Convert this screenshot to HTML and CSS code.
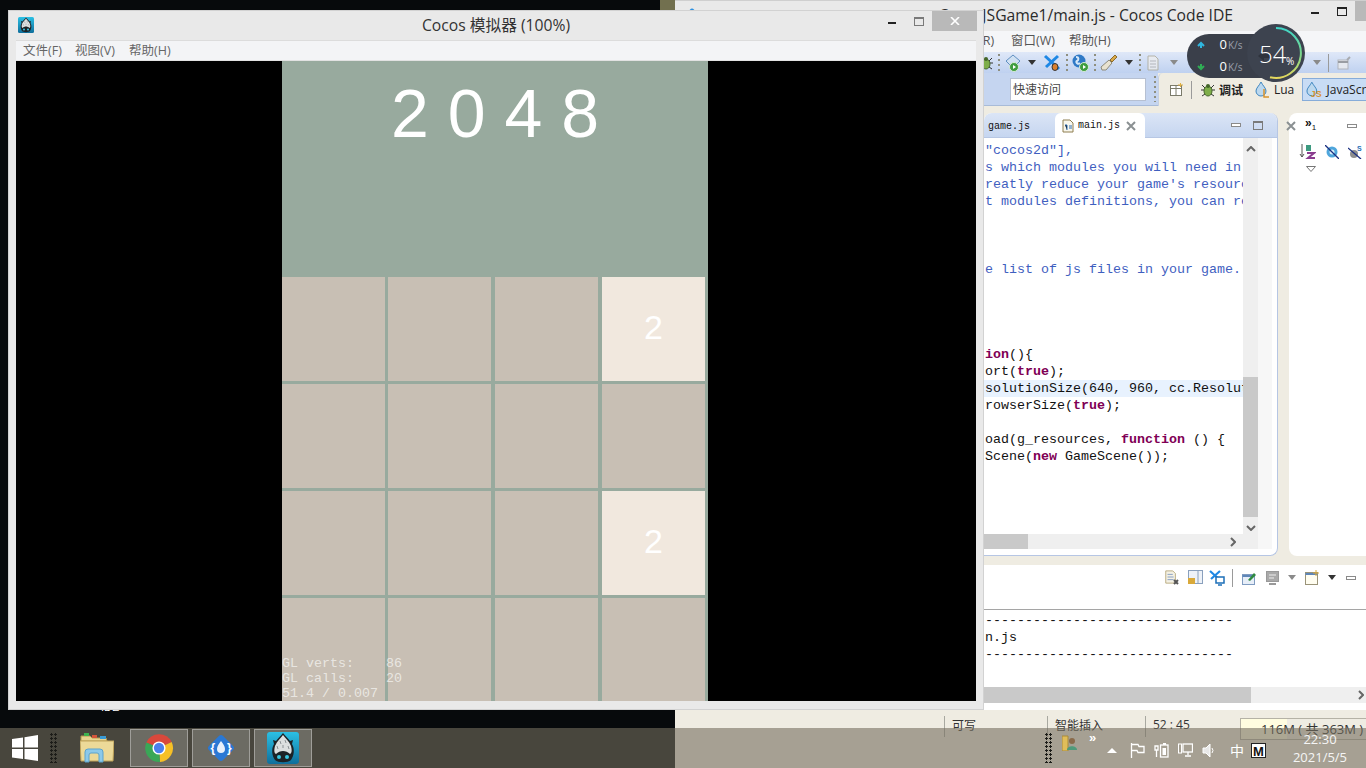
FILE: index.html
```html
<!DOCTYPE html>
<html lang="zh">
<head>
<meta charset="utf-8">
<title>Cocos 模拟器</title>
<link rel="stylesheet" href="styles.css">
</head>
<body>
<svg class="defs" width="0" height="0">
  <defs>
    <linearGradient id="cocosBg" x1="0" y1="0" x2="0" y2="1"><stop offset="0" stop-color="#2bc0e4"/><stop offset="1" stop-color="#0f6f9c"/></linearGradient>
    <linearGradient id="ringGrad" x1="0" y1="0" x2="0" y2="1"><stop offset="0" stop-color="#3fd6c8"/><stop offset=".55" stop-color="#7fd88a"/><stop offset="1" stop-color="#e6d85c"/></linearGradient>
    <symbol id="cocos" viewBox="0 0 32 32">
      <rect width="32" height="32" rx="3" fill="url(#cocosBg)"/>
      <path d="M16 1 C18 4 21 6 23 9 L26 8 L25 12 C28 17 27 24 24 28 C21 31 11 31 8 28 C5 24 4 17 7 12 L6 8 L9 9 C11 6 14 4 16 1Z" fill="#1c2226"/>
      <path d="M16 3 C18 6 22 9 24 14 C25 18 25 21 23 22 C19 18 13 18 9 22 C7 21 7 18 8 14 C10 9 14 6 16 3Z" fill="#dcdfdf"/>
      <path d="M13 9l1 3M18 8l1 3M10 14l1 3M21 14l1 3M16 13v3" stroke="#8c9295"/>
      <circle cx="12" cy="25" r="2" fill="#39c6e0"/><circle cx="20" cy="25" r="2" fill="#39c6e0"/>
    </symbol>
    <symbol id="bug" viewBox="0 0 16 16">
      <path d="M2 3l3 3M14 3l-3 3M1 8h3M15 8h-3M2 14l3-2M14 14l-3-2" stroke="#333" fill="none"/>
      <ellipse cx="8" cy="9" rx="4" ry="5" fill="#7fae4a" stroke="#44662a"/>
      <circle cx="8" cy="4" r="2" fill="#44662a"/>
    </symbol>
    <symbol id="doc" viewBox="0 0 16 16">
      <path d="M2 1h8l3 3v11H2z" fill="#f4f1e4" stroke="#b5a678"/>
      <path d="M4 5h6M4 8h7M4 11h7" stroke="#7d97c0"/>
    </symbol>
    <symbol id="jsdrop" viewBox="0 0 18 18">
      <path d="M7 1C9 5 12 7 12 10a5 5 0 0 1-10 0C2 7 5 5 7 1Z" fill="#bcd8ee" stroke="#3e86c0"/>
    </symbol>
  </defs>
</svg>

<div class="desk-patch"></div>
<div class="desk-label">IDE</div>

<section class="ide">
  <header class="ide-title">
    <svg class="ide-title-icon" width="16" height="16" viewBox="0 0 16 16"><rect x="2" y="2" width="12" height="12" rx="3" fill="#2b8fe0" transform="rotate(45 8 8)"/></svg>
    <span class="ide-title-text">CocosJSGame1/main.js - Cocos Code IDE</span>
    <div class="ide-controls">
      <span class="ctl"><i class="ctl-min"></i></span>
      <span class="ctl"><i class="ctl-max ctl-max-dark"></i></span>
      <span class="ctl ctl-close"></span>
    </div>
  </header>
  <nav class="ide-menu">
    <span class="m1">运行(R)</span><span class="m2">窗口(W)</span><span class="m3">帮助(H)</span>
  </nav>
  <div class="ide-toolbar">
    <svg width="16" height="16"><use href="#bug"/></svg>
    <i class="grip"></i>
    <svg width="18" height="18" viewBox="0 0 18 18"><path d="M1 7l7-6 7 6-7 7z" fill="#cfe0f2" stroke="#5f8fc0"/><circle cx="9" cy="13" r="4.5" fill="#3f9d3f" stroke="#d8ecd8"/><path d="M8 11l3 2-3 2z" fill="#fff"/></svg>
    <i class="tri"></i>
    <svg width="18" height="18" viewBox="0 0 18 18"><path d="M2 2l14 13M15 2L3 13" stroke="#1e88e5" stroke-width="3"/><ellipse cx="12" cy="13" rx="3" ry="3.5" fill="#d9802e" stroke="#333"/></svg>
    <i class="grip"></i>
    <svg width="17" height="18" viewBox="0 0 17 18"><circle cx="7" cy="7" r="6.5" fill="#2f79c6"/><path d="M4 3c3 0 3 3 1 4s1 4 3 2" stroke="#d6e8f8" stroke-width="2" fill="none"/><circle cx="12" cy="13" r="4.5" fill="#3f9d3f" stroke="#d8ecd8"/><path d="M11 11l3 2-3 2z" fill="#fff"/></svg>
    <i class="grip"></i>
    <svg width="18" height="18" viewBox="0 0 18 18"><path d="M10 6l5-5 2 2-5 5z" fill="#d9a94a" stroke="#8a6a2a"/><path d="M9 6l3 3-6 7H2L1 13z" fill="#e8e2d0" stroke="#8d8a7a"/></svg>
    <i class="tri"></i>
    <i class="grip"></i>
    <svg width="12" height="16" viewBox="0 0 12 16" class="dim"><path d="M1 1h7l3 3v11H1z" fill="#eee" stroke="#a9a48f"/><path d="M3 6h6M3 9h6M3 12h6" stroke="#aaa"/></svg>
    <i class="tri tri-dim"></i>
    <i class="tri tri-dim"></i>
    <i class="sep"></i>
    <svg width="14" height="14" viewBox="0 0 14 14" class="dim"><rect x="1" y="4" width="10" height="9" fill="#eee" stroke="#aaa"/><path d="M1 6h10" stroke="#888" stroke-width="2"/><path d="M10 4l3-3" stroke="#999" stroke-width="2"/></svg>
  </div>
  <div class="ide-row2">
    <div class="quick">
      <span class="quick-box">快速访问</span>
      <i class="grip grip-tall"></i>
    </div>
    <div class="persp">
      <svg width="13" height="13" viewBox="0 0 13 13"><rect x=".5" y="2.5" width="11" height="10" fill="#fff" stroke="#7a7a6a"/><path d="M.5 5.5h11M6 3v9" stroke="#7a7a6a"/><path d="M8 2h5M10.5 0v4" stroke="#e0b040"/></svg>
      <i class="sep sep-tall"></i>
      <svg width="16" height="16"><use href="#bug"/></svg>
      <span class="persp-label persp-cn">调试</span>
      <svg width="17" height="18" viewBox="0 0 17 18"><use href="#jsdrop" width="18" height="18"/><path d="M10 8v8h5" stroke="#d8922e" stroke-width="1.5" fill="none"/></svg>
      <span class="persp-label">Lua</span>
      <div class="persp-active">
        <svg width="20" height="18" viewBox="0 0 20 18"><use href="#jsdrop" width="18" height="18"/><text x="6" y="16" class="js-mark">JS</text></svg>
        <span>JavaScript</span>
      </div>
    </div>
  </div>

  <div class="ide-body">
    <div class="ide-panels">
      <section class="editor">
        <div class="tabs">
          <span class="tab-file">game.js</span>
          <span class="tab-active">
            <svg width="12" height="14" viewBox="0 0 12 14"><path d="M1 1h7l3 3v9H1z" fill="#f8f6ec" stroke="#8f7f50"/><path d="M3 6h2v5M7 7h3M7 9h3" stroke="#2f6fb5"/></svg>
            <span>main.js</span>
            <svg width="10" height="10" viewBox="0 0 10 10"><path d="M1 1l8 8M9 1l-8 8" stroke="#8a9092" stroke-width="2"/></svg>
          </span>
          <span class="tab-tools"><i class="ctl-tiny"></i><i class="ctl-max"></i></span>
        </div>
        <div class="editor-grid">
          <div class="code">
            <div class="ln"><span class="c">"cocos2d"],</span></div>
            <div class="ln"><span class="c">s which modules you will need in your game</span></div>
            <div class="ln"><span class="c">reatly reduce your game's resource size</span></div>
            <div class="ln"><span class="c">t modules definitions, you can refer to</span></div>
            <div class="ln"></div>
            <div class="ln"></div>
            <div class="ln"></div>
            <div class="ln"><span class="c">e list of js files in your game.</span></div>
            <div class="ln"></div>
            <div class="ln"></div>
            <div class="ln"></div>
            <div class="ln"></div>
            <div class="ln"><b class="k">ion</b>(){</div>
            <div class="ln">ort(<b class="k">true</b>);</div>
            <div class="ln ln-current">solutionSize(640, 960, cc.ResolutionPolicy</div>
            <div class="ln">rowserSize(<b class="k">true</b>);</div>
            <div class="ln"></div>
            <div class="ln">oad(g_resources, <b class="k">function</b> () {</div>
            <div class="ln">Scene(<b class="k">new</b> GameScene());</div>
          </div>
          <div class="vbar">
            <svg class="chev" width="10" height="6" viewBox="0 0 10 6"><path d="M1 5l4-4 4 4" stroke="#666" stroke-width="2" fill="none"/></svg>
            <div class="vthumb"></div>
            <svg class="chev" width="10" height="6" viewBox="0 0 10 6"><path d="M1 1l4 4 4-4" stroke="#666" stroke-width="2" fill="none"/></svg>
          </div>
          <div class="ruler"></div>
          <div class="hbar">
            <div class="hthumb"></div>
            <svg class="chev-r" width="6" height="10" viewBox="0 0 6 10"><path d="M1 1l4 4-4 4" stroke="#666" stroke-width="2" fill="none"/></svg>
          </div>
        </div>
      </section>
      <section class="outline">
        <svg class="outline-x" width="10" height="10" viewBox="0 0 10 10"><path d="M1 1l8 8M9 1l-8 8" stroke="#8a9092" stroke-width="2"/></svg>
        <div class="outline-tabs">
          <span class="more">»<sub>1</sub></span>
          <i class="ctl-tiny"></i>
        </div>
        <div class="outline-tools">
          <svg width="17" height="17" viewBox="0 0 17 17"><path d="M3 1v13M1 11l2 3 2-3" stroke="#555" fill="none"/><path d="M7 2h5v6H7z" fill="#3d9a80"/><path d="M8 10h7l-6 5h7" stroke="#8a3d8f" stroke-width="2" fill="none"/></svg>
          <svg width="14" height="14" viewBox="0 0 14 14"><circle cx="7" cy="7" r="5.5" fill="#4fa6dc"/><circle cx="7" cy="7" r="2.5" fill="#d8eefa"/><path d="M0 0l14 14" stroke="#1a2f80" stroke-width="1.3"/></svg>
          <svg width="14" height="14" viewBox="0 0 14 14"><circle cx="6" cy="9" r="4" fill="#8d8d8d"/><path d="M0 3l13 11" stroke="#1a2f80" stroke-width="1.3"/><text x="9" y="6" class="s-mark">S</text></svg>
        </div>
        <svg class="outline-menu" width="10" height="6" viewBox="0 0 10 6"><path d="M.5.5h9L5 5.5z" fill="#fff" stroke="#777"/></svg>
      </section>
    </div>
    <section class="console">
      <div class="console-tools">
        <svg width="15" height="15" viewBox="0 0 15 15"><use href="#doc" width="14" height="14"/><path d="M10 10l4 4M14 10l-4 4" stroke="#555" stroke-width="2"/></svg>
        <svg width="15" height="15" viewBox="0 0 15 15"><rect x=".5" y=".5" width="14" height="13" fill="#eef2f8" stroke="#8aa0bd"/><path d="M10 1v12" stroke="#8aa0bd"/><rect x="0" y="8" width="7" height="6" fill="#d9a93a"/></svg>
        <svg width="16" height="16" viewBox="0 0 16 16"><path d="M1 1l11 10M11 1L2 9" stroke="#1e88e5" stroke-width="2.2"/><rect x="7" y="7" width="8" height="6" fill="#fff" stroke="#1d6fb8" stroke-width="1.5"/><path d="M9 15h4" stroke="#1d6fb8" stroke-width="1.5"/></svg>
        <i class="sep sep-tall"></i>
        <svg width="14" height="14" viewBox="0 0 14 14"><rect x=".5" y="3.5" width="12" height="10" fill="#e7eef8" stroke="#7f9bc0"/><path d="M.5 5h12" stroke="#5f86b8" stroke-width="2"/><path d="M6 9l6-7 2 2-6 6z" fill="#2f8a3f"/></svg>
        <svg width="14" height="14" viewBox="0 0 14 14"><rect x=".5" y=".5" width="12" height="10" fill="#a9a9a9" stroke="#999"/><path d="M3 4h7M3 7h5" stroke="#eee"/><path d="M3 13h7" stroke="#999" stroke-width="2"/></svg>
        <i class="tri tri-dim"></i>
        <svg width="15" height="15" viewBox="0 0 15 15"><rect x=".5" y="2.5" width="12" height="12" fill="#fffdf0" stroke="#9a9378"/><path d="M.5 4h12" stroke="#5f86b8" stroke-width="2"/><path d="M8 3h6M11 0v6" stroke="#d8a93a"/></svg>
        <i class="tri"></i>
        <i class="ctl-tiny"></i>
      </div>
      <div class="console-text">
        <div class="ln">-------------------------------</div>
        <div class="ln">n.js</div>
        <div class="ln">-------------------------------</div>
      </div>
      <div class="console-scroll">
        <div class="console-thumb"></div>
        <svg class="chev-r" width="6" height="10" viewBox="0 0 6 10"><path d="M1 1l4 4-4 4" stroke="#666" stroke-width="2" fill="none"/></svg>
      </div>
    </section>
  </div>
  <footer class="status">
    <span>可写</span>
    <span>智能插入</span>
    <span>52 : 45</span>
    <div class="mem"><div class="mem-fill"></div><span class="mem-text">116M ( 共 363M )</span></div>
  </footer>
</section>

<svg class="meter" width="119" height="60" viewBox="0 0 119 60">
  <path d="M22 10H80V54H22a22 22 0 0 1 0-44Z" fill="#3a3f4a"/>
  <path d="M11 22l3-3 3 3M14 19v5" stroke="#2fb7e0" stroke-width="2" fill="none"/>
  <path d="M11 42l3 3 3-3M14 45v-5" stroke="#2fae55" stroke-width="2" fill="none"/>
  <text x="32.500" y="25" class="meter-num">0</text><text x="41" y="25" class="meter-unit">K/s</text>
  <text x="32.500" y="47" class="meter-num">0</text><text x="41" y="47" class="meter-unit">K/s</text>
  <circle cx="89" cy="29" r="29" fill="#3d434f"/>
  <path d="M89 4A25 25 0 1 1 83 53.3" fill="none" stroke="url(#ringGrad)" stroke-width="2"/>
  <path d="M71 32l6-5v3h8v4h-8v3z" fill="#2f333c"/>
  <text x="72" y="39" class="meter-big">54</text>
  <text x="99" y="41" class="meter-pct">%</text>
</svg>

<section class="sim">
  <header class="sim-title">
    <svg class="sim-icon" width="16" height="16"><use href="#cocos"/></svg>
    <span class="sim-title-text">Cocos 模拟器 (100%)</span>
    <div class="sim-controls">
      <span class="ctl"><i class="ctl-min"></i></span>
      <span class="ctl"><i class="ctl-max"></i></span>
      <span class="ctl ctl-close"><svg width="10" height="8" viewBox="0 0 10 8"><path d="M1 0l8 8M9 0L1 8" stroke="#fff" stroke-width="1.6"/></svg></span>
    </div>
  </header>
  <nav class="sim-menu"><span>文件(F)</span><span>视图(V)</span><span>帮助(H)</span></nav>
  <div class="viewport">
    <main class="game">
      <div class="game-head">2 0 4 8</div>
      <div class="board">
        <div class="tile"></div><div class="tile"></div><div class="tile"></div><div class="tile tile-two">2</div>
        <div class="tile"></div><div class="tile"></div><div class="tile"></div><div class="tile"></div>
        <div class="tile"></div><div class="tile"></div><div class="tile"></div><div class="tile tile-two">2</div>
        <div class="tile"></div><div class="tile"></div><div class="tile"></div><div class="tile"></div>
      </div>
      <pre class="stats">GL verts:    86
GL calls:    20
51.4 / 0.007</pre>
    </main>
  </div>
</section>

<footer class="taskbar">
  <svg class="win" width="26" height="26" viewBox="0 0 26 26"><path d="M0 4l11-1.600v10H0zM12.500 2.200L26 0v12.400H12.500zM0 14h11v10L0 22.400zM12.500 14H26v12l-13.500-2z" fill="#fff"/></svg>
  <i class="dots"></i>
  <svg class="folder" width="34" height="30" viewBox="0 0 34 30">
    <path d="M1 3h9l2 2h14l1 3H1z" fill="#e8d48f" stroke="#b59a50"/>
    <path d="M4 0h5v3H4z" fill="#3eb34f"/><path d="M12 2h5v3h-5z" fill="#d4553a"/><path d="M20 3h6v3h-6z" fill="#3a9ad4"/>
    <path d="M0 8h34l-1 20H1z" fill="#ecd998" stroke="#bfa35a"/>
    <path d="M5 29V19q0-3 3-3h12q3 0 3 3v10h-4v-7q0-2-2-2h-6q-2 0-2 2v7z" fill="#8cc9ea" stroke="#5da3cc"/>
  </svg>
  <div class="task-btn">
    <svg width="30" height="30" viewBox="0 0 32 32">
      <path d="M16 16L2.500 10A15 15 0 0 1 29.500 9.500Z" fill="#d9483b"/>
      <path d="M16 16L29.500 9.500A15 15 0 0 1 17 31Z" fill="#f6c026"/>
      <path d="M16 16L17 31A15 15 0 0 1 2.500 10Z" fill="#3aa757"/>
      <circle cx="16" cy="16" r="7" fill="#fff"/><circle cx="16" cy="16" r="5.500" fill="#4a80ec"/>
    </svg>
  </div>
  <div class="task-btn">
    <svg width="32" height="32" viewBox="0 0 32 32">
      <rect x="6" y="6" width="20" height="20" rx="3" fill="#2a78d4" transform="rotate(45 16 16)"/>
      <path d="M16 9c2 3 4 5 4 8a4 4 0 0 1-8 0c0-3 2-5 4-8z" fill="#e8f0fa"/>
      <text x="5.500" y="20" class="brace">{</text><text x="22" y="20" class="brace">}</text>
    </svg>
  </div>
  <div class="task-btn">
    <svg width="32" height="32"><use href="#cocos"/></svg>
  </div>
  <div class="tray">
    <i class="dots"></i>
    <svg class="tray-folder" width="15" height="16" viewBox="0 0 15 16"><path d="M0 1h6v15H0z" fill="#e0bd5a" stroke="#a88a3a"/><circle cx="10" cy="6" r="3" fill="#8a6a4a"/><path d="M5 15c0-5 10-5 10 0z" fill="#4f9a7a"/></svg>
    <span class="chev-tray">»</span>
    <i class="tri-up"></i>
    <svg width="15" height="15" viewBox="0 0 15 15" class="ti"><path d="M1.500 0v15M2 1.500h6l1 2h5v6H8l-1-2H2" stroke="#fff" fill="none" stroke-width="1.300"/></svg>
    <svg width="15" height="15" viewBox="0 0 15 15" class="ti"><path d="M1 3h3v4H1zM2.500 7v7" stroke="#fff" fill="none" stroke-width="1.300"/><rect x="6.500" y="2" width="7.500" height="12" fill="none" stroke="#fff" stroke-width="1.300"/><rect x="8.500" y="5" width="3.500" height="7" fill="#fff"/><path d="M9 0h3v2H9z" fill="#fff"/></svg>
    <svg width="15" height="15" viewBox="0 0 15 15" class="ti"><rect x="5" y="1" width="9.500" height="8" fill="none" stroke="#fff" stroke-width="1.300"/><path d="M10 9v3M7 13h6" stroke="#fff" stroke-width="1.300"/><rect x=".5" y="1" width="3" height="9" fill="none" stroke="#fff"/></svg>
    <svg width="14" height="15" viewBox="0 0 14 15" class="ti"><path d="M1 5h3l4-4v13l-4-4H1z" fill="#e8e8e8" stroke="#fff"/><path d="M10 5q2 2.500 0 5" stroke="#fff" fill="none"/></svg>
    <span class="ime">中</span>
    <span class="ime-m">M</span>
    <div class="clock"><span>22:30</span><span>2021/5/5</span></div>
  </div>
</footer>
</body>
</html>
```

FILE: styles.css
```css
* { box-sizing: border-box; }
html, body { margin: 0; padding: 0; }
body {
  width: 1366px;
  height: 768px;
  overflow: hidden;
  position: relative;
  background: #070a0c;
  font-family: "Open Sans", "Noto Sans CJK SC", sans-serif;
  font-size: 12px;
}
i { display: block; font-style: normal; }
svg { display: block; }
.defs { position: absolute; }

.desk-patch { position: absolute; left: 660px; top: 0; width: 15px; height: 10px; background: #72704f; }
.desk-label { position: absolute; left: 101px; top: 700px; color: #fff; font: 11px/14px "Liberation Sans", sans-serif; }

/* shared bits */
.ctl { width: 27px; height: 20px; display: flex; align-items: center; justify-content: center; flex: none; }
.ctl-close { width: 45px; background: #b9b9b9; }
.ctl-min { width: 8px; height: 2px; background: #222; margin-top: 4px; }
.ctl-max { width: 10px; height: 9px; border: 1px solid #7a7a7a; border-top-width: 2px; }
.ctl-max-dark { border-color: #222; }
.ctl-tiny { width: 10px; height: 4px; border: 1px solid #8a8a8a; background: #fff; }
.tri { width: 0; height: 0; border: 4px solid transparent; border-top: 5px solid #333; border-bottom: 0; }
.tri-dim { border-top-color: #8a8a8a; }
.grip { width: 2px; height: 18px; background: repeating-linear-gradient(#8f8f7f 0 2px, transparent 2px 5px); }
.grip-tall { height: 26px; }
.sep { width: 1px; height: 18px; background: #9a9a9a; }
.sep-tall { height: 18px; }

/* IDE window */
.ide {
  position: absolute;
  left: 675px;
  top: 0;
  width: 691px;
  height: 768px;
  display: flex;
  flex-direction: column;
  overflow: hidden;
  background: #efece2;
}
.ide-title {
  height: 31px;
  flex: none;
  display: flex;
  justify-content: flex-end;
  background: #e9e9e9;
  border-top: 1px solid #cfcfcf;
  position: relative;
}
.ide-title-icon { position: absolute; left: 9px; top: 7px; }
.ide-title-text { font-size: 15.7px; line-height: 29px; color: #2b2b2b; margin-right: 68px; white-space: nowrap; }
.ide-controls { display: flex; width: 65px; flex: none; overflow: hidden; align-items: flex-start; }
.ide-menu {
  height: 21px;
  flex: none;
  display: flex;
  background: #f5f6f8;
  color: #555;
  padding-left: 279px;
  font-size: 12.5px;
  line-height: 20px;
}
.ide-menu .m1 { width: 57px; }
.ide-menu .m2 { width: 58px; }

.ide-toolbar {
  height: 21px;
  flex: none;
  display: grid;
  grid-template-columns: 20px 7px 23px 15px 23px 6px 22px 6px 25px 14px 8px 23px 143px 15px 9px 29px;
  align-items: center;
  padding-left: 303px;
  background: linear-gradient(#dfe8f8, #bfd1f0);
}
.dim { opacity: .75; }

.ide-row2 { height: 33px; flex: none; display: flex; }
.quick {
  width: 483px;
  flex: none;
  background: #c5d5f0;
  padding-left: 335px;
  display: flex;
  align-items: center;
  gap: 8px;
  border-bottom: 1px solid #a8bbd8;
}
.quick-box {
  width: 136px;
  height: 23px;
  flex: none;
  background: #fff;
  border: 1px solid #b6c0d2;
  padding-left: 2px;
  color: #444;
  font-size: 12px;
  line-height: 21px;
}
.persp {
  flex: 1;
  background: #efece2;
  border-radius: 5px 0 0 0;
  border-left: 1px solid #c5d0e2;
  display: grid;
  grid-template-columns: 21px 9px 19px 35px 20px 28px 1fr;
  align-items: center;
  padding-left: 11px;
  min-width: 0;
}
.persp-label { font-size: 12px; color: #222; }
.persp-cn { font-weight: 600; }
.persp-active {
  display: flex;
  align-items: center;
  gap: 2px;
  height: 23px;
  width: 80px;
  padding-left: 2px;
  background: #c8dcf5;
  border: 1px solid #86acd9;
  color: #222;
  white-space: nowrap;
}
.js-mark { font: bold 9px "Liberation Sans", sans-serif; fill: #d8922e; }

.ide-body { flex: 1; min-height: 0; display: flex; flex-direction: column; background: #efece2; }
.ide-panels { height: 450px; flex: none; display: flex; padding: 7px 0 0 309px; }

.editor {
  width: 294px;
  height: 443px;
  flex: none;
  background: #fff;
  border-right: 1px solid #b6c6e4;
  border-bottom: 1px solid #b6c6e4;
  border-radius: 8px 8px 8px 0;
  overflow: hidden;
  display: flex;
  flex-direction: column;
}
.tabs {
  height: 25px;
  flex: none;
  display: flex;
  background: linear-gradient(#dbe5f6, #c6d6f0);
  border-bottom: 1px solid #b7c7e4;
  font: 10px/27px "Liberation Mono", monospace;
  color: #111;
}
.tab-file { width: 71px; padding-left: 4px; }
.tab-active {
  width: 90px;
  height: 25px;
  background: #fff;
  border-radius: 6px 6px 0 0;
  display: flex;
  align-items: center;
  padding-left: 7px;
  gap: 4px;
}
.tab-active span { width: 44px; }
.tab-tools { margin-left: auto; display: flex; align-items: center; gap: 12px; padding-right: 14px; }

.editor-grid {
  flex: 1;
  min-height: 0;
  display: grid;
  grid-template-columns: 259px 15px 14px 1fr;
  grid-template-rows: 396px 15px 1fr;
}
.code {
  grid-column: 1;
  grid-row: 1;
  overflow: hidden;
  padding-top: 4px;
  font: 13.33px/17px "Liberation Mono", monospace;
  color: #111;
}
.ln { height: 17px; padding-left: 1px; white-space: pre; }
.ln-current { background: #e8f2fe; }
.c { color: #3f5fbf; }
.k { color: #7f0055; font-weight: bold; }
.vbar {
  grid-column: 2;
  grid-row: 1;
  background: #efefef;
  display: flex;
  flex-direction: column;
  align-items: center;
}
.chev { margin-top: 8px; flex: none; }
.vthumb { width: 15px; height: 140px; margin-top: 225px; background: #c9c9c9; flex: none; }
.ruler { grid-column: 3; grid-row: 1 / span 2; background: #f7f7f7; }
.hbar {
  grid-column: 1 / span 2;
  grid-row: 2;
  background: #efefef;
  display: flex;
  align-items: center;
  justify-content: space-between;
  padding-right: 22px;
}
.hthumb { width: 44px; height: 15px; background: #c9c9c9; }

.outline {
  flex: 1;
  height: 443px;
  margin-left: 11px;
  background: #fff;
  border-radius: 8px 0 0 8px;
  position: relative;
}
.outline-x { position: absolute; left: -3px; top: 8px; }
.outline-tabs { height: 25px; display: flex; align-items: center; padding-left: 16px; gap: 20px; }
.more { font: bold 12px/14px "Liberation Sans", sans-serif; color: #111; width: 22px; }
.more sub { font-size: 8px; font-weight: normal; }
.outline-tools { display: flex; gap: 9px; padding: 5px 0 0 10px; align-items: center; }
.s-mark { font: bold 7px "Liberation Sans", sans-serif; fill: #1d6fb8; }
.outline-menu { margin: 6px 0 0 17px; }

.console { flex: 1; min-height: 0; margin-top: 9px; background: #fff; display: flex; flex-direction: column; }
.console-tools {
  height: 45px;
  flex: none;
  display: grid;
  grid-template-columns: 24px 21px 23px 10px 24px 22px 17px 23px 18px 20px;
  justify-content: end;
  align-items: center;
  padding-bottom: 19px;
  border-bottom: 1px solid #a5a5a5;
}
.console-text { flex: 1; padding: 2px 0 0 310px; font: 13.33px/17px "Liberation Mono", monospace; color: #111; }
.console-text .ln { padding-left: 0; }
.console-scroll { height: 16px; flex: none; margin-bottom: 7px; background: #efefef; display: flex; justify-content: space-between; align-items: center; padding-right: 2px; }
.console-thumb { width: 576px; height: 16px; background: #c9c9c9; }

.status {
  height: 58px;
  flex: none;
  display: grid;
  grid-template-columns: 103px 98px 95px 1fr;
  padding: 6px 0 0 269px;
  background: #efece2;
  color: #333;
  font-size: 12px;
}
.status > span { border-left: 1px solid #a8a8a0; height: 21px; padding: 0 0 0 7px; white-space: nowrap; }
.mem { height: 22px; margin-top: 2px; position: relative; border: 1px solid #b5b2a6; border-right: 0; display: flex; }
.mem-fill { width: 46px; background: #fffde0; }
.mem-text { position: absolute; left: 20px; top: 0; font-size: 13px; line-height: 20px; color: #333; white-space: nowrap; }

/* network meter overlay */
.meter { position: absolute; left: 1187px; top: 24px; }
.meter-num { font: 13px "Open Sans", sans-serif; fill: #fff; }
.meter-unit { font: 10px "Open Sans", sans-serif; fill: #9aa0aa; }
.meter-big { font: 300 24px "Open Sans", sans-serif; fill: #fff; }
.meter-pct { font: 10px "Open Sans", sans-serif; fill: #fff; }

/* simulator window */
.sim {
  position: absolute;
  left: 8px;
  top: 10px;
  width: 976px;
  height: 700px;
  background: #e9e9e9;
  border: 1px solid #d2d2d2;
}
.sim-title {
  height: 29px;
  display: grid;
  grid-template-columns: 1fr auto 1fr;
  align-items: start;
}
.sim-icon { margin: 6px 0 0 9px; }
.sim-title-text { font-size: 15.7px; line-height: 29px; color: #333; }
.sim-controls { display: flex; justify-content: flex-end; margin-right: 6px; }
.sim-menu {
  height: 21px;
  margin: 0 7px;
  display: flex;
  background: #f3f4f6;
  border-top: 1px solid #dcdcdc;
  border-bottom: 1px solid #e2e2e2;
  padding-left: 7px;
  color: #666;
  font-size: 12.5px;
  line-height: 19px;
}
.sim-menu span { width: 54px; flex: none; }
.sim-menu span:first-child { width: 52px; }
.viewport {
  height: 640px;
  margin: 0 7px;
  background: #000;
  display: flex;
  padding-left: 266px;
}
.game {
  width: 426px;
  height: 640px;
  background: #98aa9e;
  overflow: hidden;
  position: relative;
  display: flex;
  flex-direction: column;
}
.game-head {
  height: 216px;
  flex: none;
  text-align: center;
  font: 68px/104px "Liberation Sans", sans-serif;
  color: #fff;
}
.board {
  display: grid;
  grid-template-columns: 106px 107px 107px 106px;
  grid-template-rows: 107px 107px 107px 104px;
  justify-items: start;
}
.tile {
  width: 103px;
  height: 104px;
  background: #c8bfb4;
}
.tile-two {
  background: #f1e8de;
  color: #fff;
  font: 34px/100px "Liberation Sans", sans-serif;
  text-align: center;
}
.stats {
  position: absolute;
  left: 0;
  bottom: 0;
  margin: 0;
  font: 13.33px/15px "Liberation Mono", monospace;
  color: rgba(255, 255, 255, .62);
}

/* taskbar */
.taskbar {
  position: absolute;
  left: 0;
  right: 0;
  bottom: 0;
  height: 40px;
  display: flex;
  align-items: center;
  background: rgba(117, 110, 95, .6);
}
.win { margin-left: 12px; flex: none; }
.dots {
  width: 8px;
  height: 30px;
  flex: none;
  margin-left: 12px;
  background: radial-gradient(circle at 1.5px 1.5px, #1c1c18 1.2px, transparent 1.4px) 0 0 / 4px 4px;
}
.folder { margin-left: 22px; margin-right: 16px; flex: none; }
.task-btn {
  width: 58px;
  height: 38px;
  margin-right: 4px;
  flex: none;
  display: flex;
  align-items: center;
  justify-content: center;
  background: rgba(255, 255, 255, .2);
  border: 1px solid rgba(255, 255, 255, .35);
}
.brace { font: bold 12px "Liberation Sans", sans-serif; fill: #fff; }
.tray { margin-left: auto; width: 333px; height: 40px; flex: none; display: flex; align-items: center; color: #fff; }
.tray .dots { margin-left: 12px; }
.tray-folder { margin: -10px 0 0 9px; flex: none; }
.chev-tray { margin: -20px 0 0 12px; width: 18px; font: bold 13px/14px "Liberation Sans", sans-serif; }
.tri-up { width: 0; height: 0; border: 5px solid transparent; border-bottom: 5px solid #fff; border-top: 0; margin: 4px 13px 0 0; flex: none; }
.ti { margin: 4px 9px 0 0; flex: none; }
.ime { margin: 4px 7px 0 5px; font: 14px/16px "Noto Sans CJK SC", sans-serif; }
.ime-m {
  width: 15px;
  height: 15px;
  margin: 4px 0 0 0;
  background: #fff;
  color: #111;
  font: bold 13px/15px "Liberation Sans", sans-serif;
  text-align: center;
  border: 1px solid #222;
}
.clock {
  width: 80px;
  margin-left: 14px;
  display: flex;
  flex-direction: column;
  align-items: center;
  font-size: 13px;
  line-height: 18px;
  color: #f5f5f5;
}
```
